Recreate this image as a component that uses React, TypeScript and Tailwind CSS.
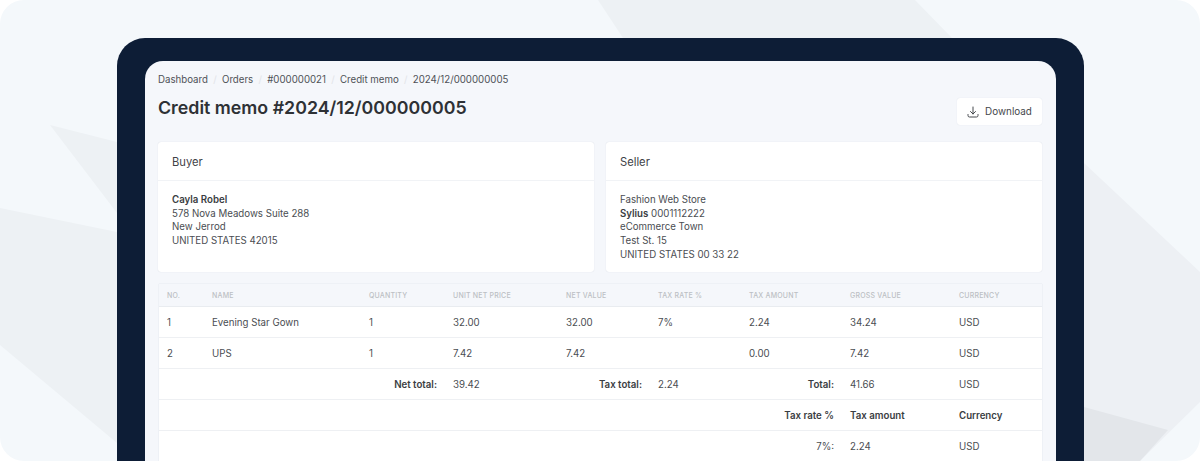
const crumbs = ['Dashboard', 'Orders', '#000000021', 'Credit memo', '2024/12/000000005']

const headers = ['No.', 'Name', 'Quantity', 'Unit net price', 'Net value', 'Tax rate %', 'Tax amount', 'Gross value', 'Currency']
const widths = [45, 157, 84, 113, 92, 91, 101, 109, 91]

const items = [
  ['1', 'Evening Star Gown', '1', '32.00', '32.00', '7%', '2.24', '34.24', 'USD'],
  ['2', 'UPS', '1', '7.42', '7.42', '', '0.00', '7.42', 'USD'],
]

const cell = 'px-2 pt-[4px]'
const label = 'px-2 pt-[4px] text-right font-semibold text-[#3a3d42]'
const strong = 'px-2 pt-[4px] font-semibold text-[#3a3d42]'

function Card({ title, children }: { title: string; children: React.ReactNode }) {
  return (
    <div className="flex-1 h-[130px] bg-white rounded-[3px] shadow-[0_0_1px_rgba(30,50,80,0.18)]">
      <div className="h-[39px] px-[14px] pt-[3px] flex items-center text-[11.2px] text-[#3f4247] border-b border-[#f1f3f6]">{title}</div>
      <div className="px-[14px] pt-[12px] text-[9.7px] leading-[13.7px] text-[#4a4d52]">{children}</div>
    </div>
  )
}

function App() {
  return (
    <div className="relative h-[461px] overflow-hidden bg-white font-['Inter',sans-serif]">
      <div className="absolute inset-0 rounded-[24px] bg-[#f4f8fb] overflow-hidden">
        <svg width="1200" height="461" viewBox="0 0 1200 461">
          <polygon points="598,0 915,0 952,38 623,38" fill="#edf1f4" />
          <polygon points="50,125 117,142 117,213" fill="#edf1f4" />
          <polygon points="0,208 117,232 117,443 0,345" fill="#edf1f4" />
          <polygon points="1084,163 1200,272 1200,402 1140,461 1084,461" fill="#edf0f4" />
          <polygon points="1084,407 1168,430 1140,461 1084,461" fill="#e3e6ea" />
        </svg>
      </div>

      <div className="relative pt-[38px] pl-[117px] pr-[116px]">
        <div className="h-[480px] bg-[#0d1d36] rounded-t-[28px] pt-[23px] px-[28px]">
          <div className="h-full bg-[#f5f7fb] rounded-t-[18px] pl-[13px] pr-[14px] pt-[13px]">
            <div className="flex items-center h-[13px] text-[9.7px] text-[#4f5257]">
              {crumbs.map((c, i) => (
                <span key={c} className="flex items-center">
                  {i > 0 && <span className="w-[14px] text-center text-[#e2e4e8]">/</span>}
                  {c}
                </span>
              ))}
            </div>

            <div className="flex justify-between">
              <h1 className="mt-[7px] text-[17.8px] leading-[28px] font-semibold text-[#2e3135]">Credit memo #2024/12/000000005</h1>
              <button className="mt-[11px] h-[27px] w-[85px] bg-white rounded-[3px] shadow-[0_0_1px_rgba(30,50,80,0.15)] flex items-center justify-center gap-[6px] text-[9.9px] text-[#45484d]">
                <svg width="12" height="12" viewBox="0 0 24 24" fill="none" stroke="currentColor" strokeWidth="2" strokeLinecap="round" strokeLinejoin="round">
                  <path d="M2 17v2a3 3 0 0 0 3 3h14a3 3 0 0 0 3 -3v-2" />
                  <path d="M7 11l5 5l5 -5" />
                  <path d="M12 2l0 14" />
                </svg>
                Download
              </button>
            </div>

            <div className="flex gap-[12px] mt-[17px]">
              <Card title="Buyer">
                <div className="font-semibold text-[#3a3d42]">Cayla Robel</div>
                <div>578 Nova Meadows Suite 288</div>
                <div>New Jerrod</div>
                <div>UNITED STATES 42015</div>
              </Card>
              <Card title="Seller">
                <div>Fashion Web Store</div>
                <div>
                  <span className="font-semibold text-[#3a3d42]">Sylius</span> 0001112222
                </div>
                <div>eCommerce Town</div>
                <div>Test St. 15</div>
                <div>UNITED STATES 00 33 22</div>
              </Card>
            </div>

            <div className="mt-[12px] ml-px bg-white shadow-[0_0_1px_rgba(30,50,80,0.18)]">
              <table className="w-full table-fixed border-collapse text-[9.7px] text-[#4a4d52]">
                <colgroup>
                  {widths.map((w, i) => (
                    <col key={i} style={{ width: w }} />
                  ))}
                </colgroup>
                <thead>
                  <tr className="h-[22px] bg-[#f5f7fb] border-b border-[#e9ecf0]">
                    {headers.map((h) => (
                      <th key={h} className="px-2 pt-[2px] text-left text-[7px] font-medium uppercase tracking-[0.2px] text-[#bcbfc4]">
                        {h}
                      </th>
                    ))}
                  </tr>
                </thead>
                <tbody>
                  {items.map((row) => (
                    <tr key={row[0]} className="h-[31px] border-b border-[#eef0f3]">
                      {row.map((value, i) => (
                        <td key={i} className={cell}>{value}</td>
                      ))}
                    </tr>
                  ))}
                  <tr className="h-[31px] border-b border-[#eef0f3]">
                    <td colSpan={3} className={label}>Net total:</td>
                    <td className={cell}>39.42</td>
                    <td className={label}>Tax total:</td>
                    <td className={cell}>2.24</td>
                    <td className={label}>Total:</td>
                    <td className={cell}>41.66</td>
                    <td className={cell}>USD</td>
                  </tr>
                  <tr className="h-[31px] border-b border-[#eef0f3]">
                    <td colSpan={7} className={label}>Tax rate %</td>
                    <td className={strong}>Tax amount</td>
                    <td className={strong}>Currency</td>
                  </tr>
                  <tr className="h-[31px] border-b border-[#eef0f3]">
                    <td colSpan={7} className="px-2 pt-[4px] text-right">7%:</td>
                    <td className={cell}>2.24</td>
                    <td className={cell}>USD</td>
                  </tr>
                </tbody>
              </table>
            </div>
          </div>
        </div>
      </div>
    </div>
  )
}

export default App
